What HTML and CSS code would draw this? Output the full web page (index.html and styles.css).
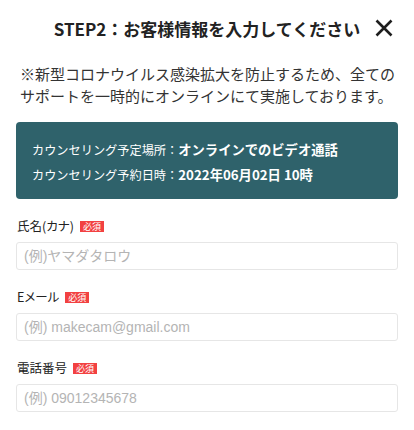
FILE: index.html
```html
<!DOCTYPE html>
<html lang="ja">
<head>
<meta charset="utf-8">
<title>STEP2</title>
<link rel="stylesheet" href="styles.css">
</head>
<body>
<div class="page">
  <header class="header">
    <h1 class="title">STEP2：お客様情報を入力してください</h1>
    <button class="close" aria-label="閉じる">
      <svg width="18" height="18" viewBox="0 0 18 18"><path d="M1.5 1.5 L16.5 16.5 M16.5 1.5 L1.5 16.5" stroke="#1e1e1e" stroke-width="2.6" stroke-linecap="butt" fill="none"/></svg>
    </button>
  </header>
  <p class="note">※新型コロナウイルス感染拡大を防止するため、全ての<br>サポートを一時的にオンラインにて実施しております。</p>
  <div class="info">
    <div class="info-row"><span class="info-label">カウンセリング予定場所：</span><span class="info-value">オンラインでのビデオ通話</span></div>
    <div class="info-row"><span class="info-label">カウンセリング予約日時：</span><span class="info-value">2022年06月02日 10時</span></div>
  </div>
  <form class="form">
    <div class="field">
      <div class="label-row"><span class="label">氏名(カナ)</span><span class="badge">必須</span></div>
      <input class="input" type="text" placeholder="(例)ヤマダタロウ">
    </div>
    <div class="field">
      <div class="label-row"><span class="label">Eメール</span><span class="badge">必須</span></div>
      <input class="input" type="text" placeholder="(例) makecam@gmail.com">
    </div>
    <div class="field">
      <div class="label-row"><span class="label">電話番号</span><span class="badge">必須</span></div>
      <input class="input" type="text" placeholder="(例) 09012345678">
    </div>
  </form>
</div>
</body>
</html>
```

FILE: styles.css
```css
* { box-sizing: border-box; }
html, body { margin: 0; padding: 0; background: #fff; }
body {
  font-family: "Noto Sans CJK JP", "Noto Sans", sans-serif;
  color: #333;
  width: 414px;
}
.page { width: 414px; }
.header {
  position: relative;
  height: 58px;
  display: flex;
  align-items: center;
  justify-content: center;
}
.title {
  margin: 0;
  font-size: 17px;
  font-weight: 700;
  color: #222;
  line-height: 24px;
  white-space: nowrap;
}
.close {
  position: absolute;
  right: 21px;
  top: 19px;
  width: 18px;
  height: 18px;
  padding: 0;
  border: 0;
  background: none;
  display: block;
}
.close svg { display: block; }
.note {
  margin: 5px 0 0;
  padding: 0 14px 0 20px;
  font-size: 15px;
  line-height: 22px;
  color: #333;
  white-space: nowrap;
}
.info {
  margin: 15px 16px 0 16px;
  background: #2f626b;
  border-radius: 4px;
  padding: 14px 16px 13px;
  color: #fff;
}
.info-row {
  line-height: 25px;
  height: 25px;
  white-space: nowrap;
}
.info-label { font-size: 12.2px; }
.info-value { font-size: 13.3px; font-weight: 700; }
.form { margin: 0 16px; }
.field { margin-top: 17px; }
.label-row {
  display: flex;
  align-items: center;
  height: 20px;
}
.label {
  font-size: 12.5px;
  color: #222;
  line-height: 20px;
  padding-left: 1px;
  font-feature-settings: "palt";
}
.badge {
  margin-left: 6px;
  background: #f24141;
  color: #fff;
  font-size: 9px;
  line-height: 11px;
  height: 11px;
  padding: 0 3px;
}
.input {
  display: block;
  width: 100%;
  height: 28px;
  margin-top: 6px;
  border: 1px solid #e6e6e6;
  border-radius: 3px;
  padding: 0 7px;
  font-family: "Liberation Sans", "Noto Sans CJK JP", sans-serif;
  font-size: 14px;
  color: #333;
  background: #fff;
  outline: none;
}
.input::placeholder { color: #b4b4b4; }
```
